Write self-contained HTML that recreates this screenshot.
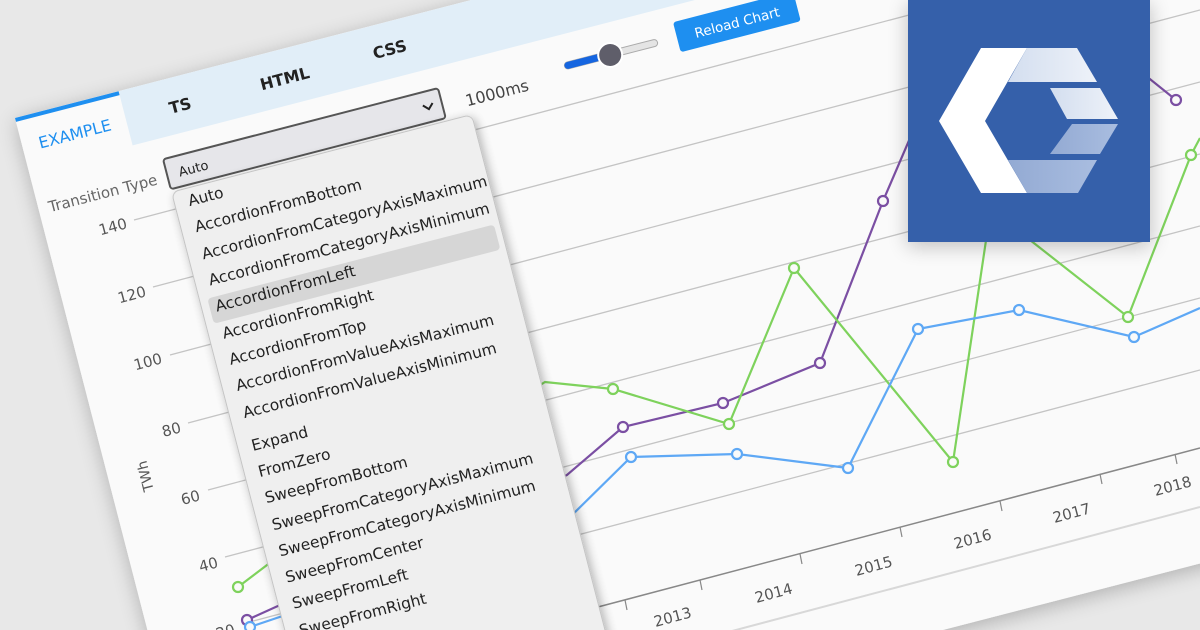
<!DOCTYPE html>
<html><head><meta charset="utf-8"><style>
html,body{margin:0;padding:0;width:1200px;height:630px;overflow:hidden;background:#e8e8e8}
svg{display:block}
text{font-family:"DejaVu Sans","Liberation Sans",sans-serif}
</style></head><body>
<svg width="1200" height="630" viewBox="0 0 1200 630" xmlns="http://www.w3.org/2000/svg">
<defs>
<filter id="sh" x="-20%" y="-20%" width="140%" height="140%"><feGaussianBlur in="SourceAlpha" stdDeviation="10"/><feOffset dx="0" dy="4"/><feComponentTransfer><feFuncA type="linear" slope="0.25"/></feComponentTransfer><feMerge><feMergeNode/><feMergeNode in="SourceGraphic"/></feMerge></filter>
<filter id="sh2" x="-20%" y="-20%" width="140%" height="140%"><feGaussianBlur in="SourceAlpha" stdDeviation="5"/><feOffset dx="2" dy="3"/><feComponentTransfer><feFuncA type="linear" slope="0.3"/></feComponentTransfer><feMerge><feMergeNode/><feMergeNode in="SourceGraphic"/></feMerge></filter>
<linearGradient id="gt" x1="0" x2="1"><stop offset="0" stop-color="#d3deef"/><stop offset="1" stop-color="#eef2f9"/></linearGradient>
<linearGradient id="gb" x1="0" x2="1"><stop offset="0" stop-color="#93aad3"/><stop offset="1" stop-color="#a9bde0"/></linearGradient>
</defs>
<rect width="1200" height="630" fill="#e8e8e8"/>
<g transform="translate(15,118) rotate(-14.5)">
  <rect x="0" y="0" width="1500" height="728" fill="#fafafa" filter="url(#sh)"/>
  <rect x="107" y="0" width="1400" height="56" fill="#e1eef8"/>
  <rect x="0" y="0" width="107" height="4" fill="#1e8ff0"/>
  <text x="54" y="36" text-anchor="middle" font-size="16" fill="#1e8ff0">EXAMPLE</text>
  <text x="163" y="35" text-anchor="middle" font-size="16" fill="#222" font-weight="bold">TS</text>
  <text x="271" y="35" text-anchor="middle" font-size="16" fill="#222" font-weight="bold">HTML</text>
  <text x="380" y="33" text-anchor="middle" font-size="16" fill="#222" font-weight="bold">CSS</text>
  <text x="122" y="100" text-anchor="end" font-size="15" fill="#666">Transition Type</text>
  <text x="473" y="102" text-anchor="middle" font-size="16" fill="#444">1000ms</text>
  <rect x="545" y="84" width="96" height="7" rx="3.5" fill="#e4e4e4" stroke="#aaa" stroke-width="1"/>
  <rect x="545" y="84" width="47" height="7" rx="3.5" fill="#1565e0"/>
  <circle cx="592" cy="88" r="12" fill="#5f5e6a" stroke="#fff" stroke-width="2"/>
  <rect x="661" y="72" width="124" height="31" rx="3" fill="#1e8ff0"/>
  <text x="723" y="93" text-anchor="middle" font-size="13.5" fill="#fff">Reload Chart</text>
</g>
<line x1="600" y1="666" x2="1200" y2="507" stroke="#d8d8d8" stroke-width="2"/>
<g stroke="#c4c4c4" stroke-width="1.3">
  <line x1="134" y1="220" x2="1200" y2="-62"/>
  <line x1="153" y1="287" x2="1200" y2="10"/>
  <line x1="170" y1="355" x2="1200" y2="82"/>
  <line x1="188" y1="423" x2="1200" y2="154"/>
  <line x1="208" y1="490" x2="1200" y2="226"/>
  <line x1="225" y1="557" x2="1200" y2="298"/>
  <line x1="242" y1="624" x2="1200" y2="370"/>
</g>
<line x1="560" y1="617" x2="1200" y2="448" stroke="#888" stroke-width="1.5"/>
<g stroke="#888" stroke-width="1.2">
  <line x1="625" y1="600" x2="627" y2="610"/><line x1="700" y1="580" x2="702" y2="590"/>
  <line x1="800" y1="554" x2="802" y2="564"/><line x1="900" y1="527" x2="902" y2="537"/>
  <line x1="1000" y1="501" x2="1002" y2="511"/><line x1="1100" y1="474" x2="1102" y2="484"/>
  <line x1="1175" y1="454" x2="1177" y2="464"/>
</g>
<g font-size="15" fill="#555">
  <text transform="translate(674,622) rotate(-15)" text-anchor="middle">2013</text>
  <text transform="translate(775,598) rotate(-15)" text-anchor="middle">2014</text>
  <text transform="translate(875,571) rotate(-15)" text-anchor="middle">2015</text>
  <text transform="translate(974,544) rotate(-15)" text-anchor="middle">2016</text>
  <text transform="translate(1073,518) rotate(-15)" text-anchor="middle">2017</text>
  <text transform="translate(1174,491) rotate(-15)" text-anchor="middle">2018</text>
</g>
<g font-size="15" fill="#555" text-anchor="end">
  <text transform="translate(128,228) rotate(-15)">140</text>
  <text transform="translate(147,296) rotate(-15)">120</text>
  <text transform="translate(163,363) rotate(-15)">100</text>
  <text transform="translate(182,432) rotate(-15)">80</text>
  <text transform="translate(201,500) rotate(-15)">60</text>
  <text transform="translate(219,567) rotate(-15)">40</text>
  <text transform="translate(236,634) rotate(-15)">20</text>
  <text transform="translate(150,475) rotate(-104)" text-anchor="middle" font-size="14">TWh</text>
</g>
<g fill="none" stroke-width="2.2">
  <polyline stroke="#7b4fa3" points="247,620 567,475 623,427 723,403 820,363 883,201 935,80 1120,55 1176,100"/>
  <polyline stroke="#7ed25c" points="238,587 300,540 545,382 613,389 729,424 794,268 953,462 995,180 1030,240 1128,317 1191,155 1200,138"/>
  <polyline stroke="#5ea8f5" points="250,627 567,520 631,457 737,454 848,468 918,329 1019,310 1134,337 1200,308"/>
</g>
<g fill="#fafafa" stroke-width="2.2">
  <g stroke="#7b4fa3"><circle cx="247" cy="620" r="5"/><circle cx="623" cy="427" r="5"/><circle cx="723" cy="403" r="5"/><circle cx="820" cy="363" r="5"/><circle cx="883" cy="201" r="5"/><circle cx="1176" cy="100" r="5"/></g>
  <g stroke="#7ed25c"><circle cx="238" cy="587" r="5"/><circle cx="613" cy="389" r="5"/><circle cx="729" cy="424" r="5"/><circle cx="794" cy="268" r="5"/><circle cx="953" cy="462" r="5"/><circle cx="1128" cy="317" r="5"/><circle cx="1191" cy="155" r="5"/></g>
  <g stroke="#5ea8f5"><circle cx="250" cy="627" r="5"/><circle cx="631" cy="457" r="5"/><circle cx="737" cy="454" r="5"/><circle cx="848" cy="468" r="5"/><circle cx="918" cy="329" r="5"/><circle cx="1019" cy="310" r="5"/><circle cx="1134" cy="337" r="5"/></g>
</g>
<g transform="translate(15,118) rotate(-14.5)">
  <rect x="133" y="77" width="284" height="31" rx="3" fill="#e6e6ea" stroke="#555" stroke-width="2"/>
  <text x="145" y="98" font-size="13" fill="#222">Auto</text>
  <polyline points="398,90 403,95 408,90" fill="none" stroke="#222" stroke-width="2"/>
  <g filter="url(#sh2)">
    <rect x="133" y="111" width="310" height="720" rx="7" fill="#efefef" stroke="#c4c4c4" stroke-width="1"/>
  </g>
  <rect x="141" y="223" width="296" height="26" rx="4" fill="#d6d6d6"/>
  <g font-size="15.5" fill="#222">
    <text x="147" y="129">Auto</text>
    <text x="147" y="156">AccordionFromBottom</text>
    <text x="147" y="184">AccordionFromCategoryAxisMaximum</text>
    <text x="147" y="211">AccordionFromCategoryAxisMinimum</text>
    <text x="147" y="238">AccordionFromLeft</text>
    <text x="147" y="266">AccordionFromRight</text>
    <text x="147" y="293">AccordionFromTop</text>
    <text x="147" y="320">AccordionFromValueAxisMaximum</text>
    <text x="147" y="348">AccordionFromValueAxisMinimum</text>
    <text x="147" y="382">Expand</text>
    <text x="147" y="409">FromZero</text>
    <text x="147" y="436">SweepFromBottom</text>
    <text x="147" y="464">SweepFromCategoryAxisMaximum</text>
    <text x="147" y="491">SweepFromCategoryAxisMinimum</text>
    <text x="147" y="518">SweepFromCenter</text>
    <text x="147" y="545">SweepFromLeft</text>
    <text x="147" y="573">SweepFromRight</text>
  </g>
</g>
<g filter="url(#sh)"><rect x="908" y="0" width="242" height="242" fill="#3461aa"/></g>
<polygon points="981,48 1027,48 985,121 1027,193 981,193 939,121" fill="#fff"/>
<polygon points="1027,48 1077,48 1097,82 1008,82" fill="url(#gt)"/>
<polygon points="1050,88 1100,88 1118,119 1067,119" fill="url(#gt)"/>
<polygon points="1072,124 1118,124 1100,154 1050,154" fill="url(#gb)"/>
<polygon points="1008,160 1097,160 1078,193 1027,193" fill="url(#gb)"/>
</svg>
</body></html>
